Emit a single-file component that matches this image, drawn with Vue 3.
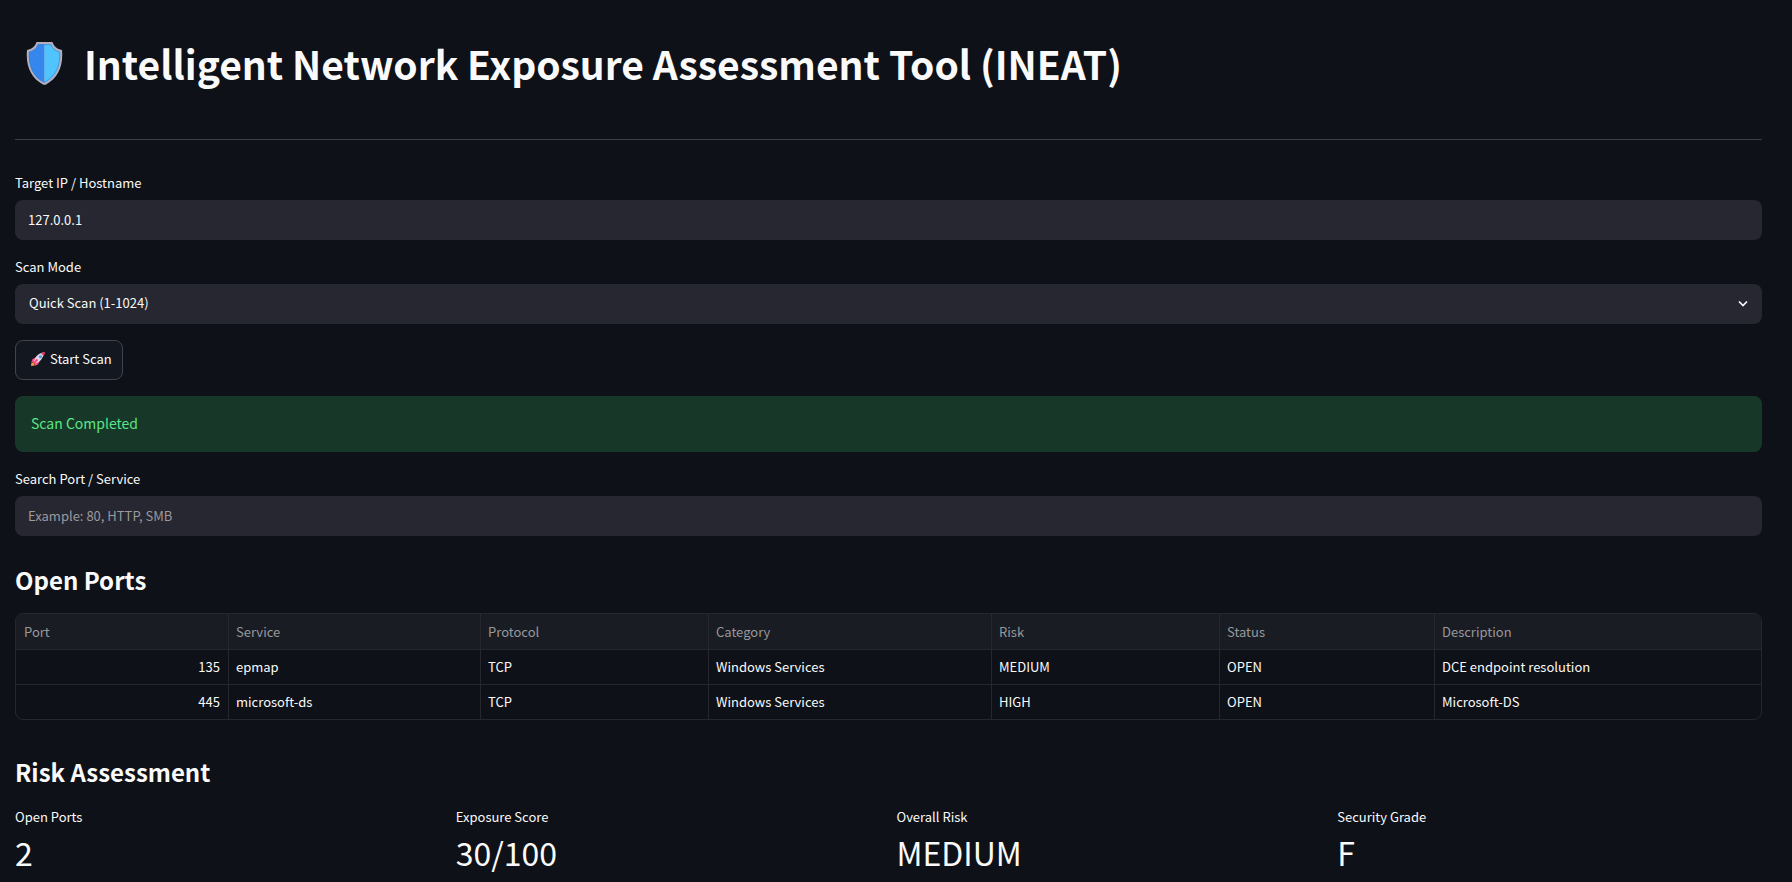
<script setup>
import { ref, computed } from 'vue'

const target = ref('127.0.0.1')
const mode = ref('Quick Scan (1-1024)')
const search = ref('')

const columns = [
  { key: 'port', label: 'Port', cls: 'c-port' },
  { key: 'service', label: 'Service', cls: 'c-service' },
  { key: 'protocol', label: 'Protocol', cls: 'c-protocol' },
  { key: 'category', label: 'Category', cls: 'c-category' },
  { key: 'risk', label: 'Risk', cls: 'c-risk' },
  { key: 'status', label: 'Status', cls: 'c-status' },
  { key: 'description', label: 'Description', cls: 'c-description' },
]

const ports = [
  { port: 135, service: 'epmap', protocol: 'TCP', category: 'Windows Services', risk: 'MEDIUM', status: 'OPEN', description: 'DCE endpoint resolution' },
  { port: 445, service: 'microsoft-ds', protocol: 'TCP', category: 'Windows Services', risk: 'HIGH', status: 'OPEN', description: 'Microsoft-DS' },
]

const rows = computed(() => {
  const q = search.value.trim().toLowerCase()
  return q ? ports.filter((p) => `${p.port} ${p.service} ${p.description}`.toLowerCase().includes(q)) : ports
})

const metrics = [
  { label: 'Open Ports', value: '2' },
  { label: 'Exposure Score', value: '30/100' },
  { label: 'Overall Risk', value: 'MEDIUM' },
  { label: 'Security Grade', value: 'F' },
]
</script>

<template>
  <main class="page">
    <header class="title">
      <svg class="shield" viewBox="0 0 37 43" aria-hidden="true">
        <path d="M10.500 0H26.500C28 4.500 31 7 36 8C37.500 24 32 36 20.500 42.200Q18.500 43.200 16.500 42.200C5 36 -0.500 24 1 8C6 7 9 4.500 10.500 0Z" fill="#b3aebc" />
        <path d="M18.500 2.200H11.700C10.500 6.200 7.500 9 3 9.700C2 24 6.800 34.500 17.300 40.300L18.500 40.700Z" fill="#3687ed" />
        <path d="M18.500 2.200H25.300C26.500 6.200 29.500 9 34 9.700C35 24 30.200 34.500 19.700 40.300L18.500 40.700Z" fill="#50c4ff" />
        <path d="M12 2.700H25C26.500 6.700 29.500 9.200 33.700 10C34.500 24 29.800 34.200 18.500 40.200C7.200 34.200 2.500 24 3.300 10C7.500 9.200 10.500 6.700 12 2.700Z" fill="none" stroke="#2f7fda" stroke-width="1" opacity="0.6" />
      </svg>
      <h1>Intelligent Network Exposure Assessment Tool (INEAT)</h1>
    </header>
    <hr />

    <div class="stack">
      <div class="field">
        <label for="target">Target IP / Hostname</label>
        <input id="target" v-model="target" type="text" />
      </div>
      <div class="field">
        <label for="mode">Scan Mode</label>
        <div class="select">
          <select id="mode" v-model="mode">
            <option>Quick Scan (1-1024)</option>
            <option>Full Scan (1-65535)</option>
          </select>
          <svg class="chevron" viewBox="0 0 10 8" aria-hidden="true">
            <path d="M1 1.500L5 5.500L9 1.500" fill="none" stroke="#fafafa" stroke-width="1.700" />
          </svg>
        </div>
      </div>
      <button class="scan" type="button">
        <svg class="rocket" viewBox="0 0 16 16" aria-hidden="true">
          <path d="M1.500 11.500L4 12L4.500 14.500L1 15Z" fill="#f9a13a" />
          <path d="M6.500 6L2.500 8L1.200 11.500L4.500 11Z" fill="#f8487f" />
          <path d="M10 9.500L8 13.500L4.500 15L5 11.500Z" fill="#f8487f" />
          <path d="M3.500 11.500C4.500 6.500 8 2 14 1.500C13.500 7.500 9.500 11.500 4.500 12.500Z" fill="#e3d5e2" />
          <path d="M11 2.300Q12.500 1.200 15 1Q15 3.500 13.700 5Z" fill="#ee3b66" />
          <circle cx="10.500" cy="5.700" r="1.800" fill="#5aa6ea" />
          <path d="M3.500 12.500L7.500 8.500" stroke="#f8487f" stroke-width="2" />
        </svg>
        <span>Start Scan</span>
      </button>
      <div class="alert" role="status">Scan Completed</div>
      <div class="field">
        <label for="search">Search Port / Service</label>
        <input id="search" v-model="search" type="text" placeholder="Example: 80, HTTP, SMB" />
      </div>
    </div>

    <h2>Open Ports</h2>
    <div class="frame">
      <table>
        <colgroup>
          <col v-for="c in columns" :key="c.key" :class="c.cls" />
        </colgroup>
        <thead>
          <tr>
            <th v-for="c in columns" :key="c.key" scope="col">{{ c.label }}</th>
          </tr>
        </thead>
        <tbody>
          <tr v-for="r in rows" :key="r.port">
            <td v-for="c in columns" :key="c.key" :class="{ num: c.key === 'port' }">{{ r[c.key] }}</td>
          </tr>
        </tbody>
      </table>
    </div>

    <h2 class="second">Risk Assessment</h2>
    <dl class="metrics">
      <div v-for="m in metrics" :key="m.label">
        <dt>{{ m.label }}</dt>
        <dd>{{ m.value }}</dd>
      </div>
    </dl>
  </main>
</template>

<style>
html,
body {
  background: #0e1117;
}
body {
  overflow: hidden;
}
</style>

<style scoped>
.page {
  padding: 0 30px 0 15px;
  color: #fafafa;
  font-family: "Noto Sans CJK JP", "Noto Sans CJK SC", "Noto Sans", sans-serif;
  font-size: 13px;
  line-height: 20px;
}
.page * {
  box-sizing: border-box;
}
.title {
  display: flex;
  align-items: center;
  gap: 21px;
  height: 127px;
  padding-left: 11px;
}
.shield {
  width: 37px;
  height: 43px;
}
h1 {
  margin: 0;
  padding-bottom: 2px;
  font-size: 39px;
  line-height: 52px;
  font-weight: 700;
}
hr {
  height: 1px;
  margin: 12px 0 32px;
  border: 0;
  background: #3c3e42;
}
.stack {
  display: flex;
  flex-direction: column;
  align-items: stretch;
  gap: 16px;
}
.field {
  display: flex;
  flex-direction: column;
  gap: 6px;
}
label {
  line-height: 22px;
}
input,
select {
  width: 100%;
  height: 40px;
  margin: 0;
  padding: 0 13px 2px;
  border: 0;
  border-radius: 8px;
  background: #262730;
  color: #fafafa;
  font: inherit;
  appearance: none;
}
input::placeholder {
  color: #9a9a9f;
  opacity: 1;
}
select {
  padding-left: 14px;
}
.select {
  position: relative;
  display: flex;
}
.chevron {
  position: absolute;
  top: 16px;
  right: 14px;
  width: 10px;
  height: 8px;
  pointer-events: none;
}
.scan {
  display: flex;
  align-self: flex-start;
  align-items: center;
  gap: 4px;
  height: 40px;
  padding: 0 10px 2px 14px;
  border: 1px solid #41444c;
  border-radius: 8px;
  background: #131720;
  color: #fafafa;
  font: inherit;
}
.rocket {
  width: 16px;
  height: 16px;
}
.alert {
  padding: 15px 16px 17px;
  border-radius: 8px;
  background: #173828;
  color: #5ce488;
  font-size: 14px;
  line-height: 24px;
}
h2 {
  margin: 27px 0 17px;
  font-size: 24px;
  line-height: 33px;
  font-weight: 700;
}
h2.second {
  margin: 35px 0 19px;
}
.frame {
  overflow: hidden;
  border: 1px solid #26282d;
  border-radius: 8px;
}
table {
  width: 100%;
  table-layout: fixed;
  border-collapse: separate;
  border-spacing: 0;
}
.c-port { width: 213px; }
.c-service { width: 252px; }
.c-protocol { width: 228px; }
.c-category { width: 283px; }
.c-risk { width: 228px; }
.c-status { width: 215px; }
.c-description { width: 326px; }
th,
td {
  height: 35px;
  padding: 0 8px 0 7px;
  border-right: 1px solid #26282d;
  border-bottom: 1px solid #26282d;
  text-align: left;
  font-weight: 400;
}
th {
  height: 36px;
  background: #1a1c24;
  color: #97989b;
}
th:first-child {
  padding-left: 8px;
}
th:last-child,
td:last-child {
  border-right: 0;
}
tbody tr:last-child td {
  height: 34px;
  border-bottom: 0;
}
td.num {
  text-align: right;
}
.metrics {
  display: grid;
  grid-template-columns: repeat(4, 1fr);
  gap: 16px;
  margin: 0;
}
dd {
  margin: 1px 0 0;
  font-size: 32px;
  line-height: 48px;
}
</style>
